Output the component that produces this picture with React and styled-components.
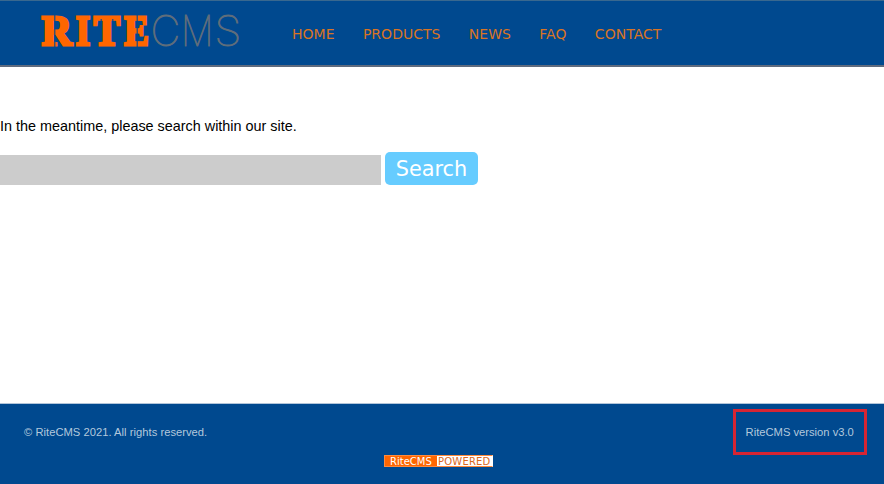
import React from "react";
import styled, { createGlobalStyle } from "styled-components";

const GlobalStyle = createGlobalStyle`
  * { box-sizing: border-box; }
  body { margin: 0; background: #fff; overflow: hidden; }
`;
const Page = styled.div`
  display: flex;
  flex-direction: column;
  height: 484px;
  font-family: "Liberation Sans", Arial, sans-serif;
`;
const Header = styled.header`
  display: flex;
  align-items: flex-start;
  height: 67px;
  background: #00498f;
  border-top: 1px solid #39688f;
  border-bottom: 2px solid #5f6b7e;
`;
const Logo = styled.svg`
  display: block;
  width: 228px;
  height: 64px;
  margin-left: 28px;
  flex: none;
`;
const Nav = styled.nav`
  display: flex;
  gap: 28.35px;
  margin: 24px 0 0 36px;
`;
const NavLink = styled.a`
  font: 14px/18px "DejaVu Sans", sans-serif;
  letter-spacing: 0.02px;
  color: #d97424;
`;
const Main = styled.main`
  flex: 1;
  padding-top: 50px;
`;
const Message = styled.p`
  margin: 0;
  font-size: 14.4px;
  line-height: 18px;
  color: #000;
`;
const SearchForm = styled.form`
  display: flex;
  align-items: flex-end;
  gap: 4px;
  margin-top: 17px;
`;
const SearchInput = styled.input`
  width: 381px;
  height: 30px;
  border: 0;
  border-radius: 0;
  background: #ccc;
  outline: none;
`;
const SearchButton = styled.button`
  width: 93px;
  height: 33px;
  padding: 1px 0 0;
  border: 0;
  border-radius: 5px;
  background: #66ccff;
  color: #fff;
  font: 20.8px/32px "DejaVu Sans", sans-serif;
`;
const Footer = styled.footer`
  height: 81px;
  border-top: 1px solid #b2c5da;
  background: #00498f;
  color: #b3c8dc;
  font-size: 11.2px;
`;
const FooterRow = styled.div`
  display: flex;
  justify-content: space-between;
  padding: 5px 17px 0 24px;
`;
const Copyright = styled.span`
  padding-top: 17px;
  line-height: 13px;
  letter-spacing: 0.025px;
`;
const Version = styled.span`
  width: 134px;
  height: 46px;
  border: 3px solid #d62534;
  padding: 14px 0 0 9.6px;
  line-height: 13px;
`;
const Badge = styled.div`
  display: flex;
  width: 109px;
  height: 12px;
  margin-left: 384px;
  border: 1px solid #ff8a3c;
  border-right-color: #fff;
  font: 10px/11px "DejaVu Sans", sans-serif;
`;
const BadgeName = styled.span`
  width: 52px;
  padding-left: 5px;
  background: #ff6600;
  color: #fff;
`;
const BadgeStatus = styled.span`
  flex: 1;
  padding-left: 1px;
  background: #fff;
  color: #d9681e;
  letter-spacing: 0.2px;
`;

const heavyLetters = [
  { char: "R", x: 41.8, width: 30.2 },
  { char: "I", x: 75.8, width: 14.4 },
  { char: "T", x: 93.8, width: 26.2 },
  { char: "E", x: 124.2, width: 24.6 },
];
const thinLetters = [
  { char: "C", x: 150.6, width: 29.8 },
  { char: "M", x: 180.9, width: 32.4 },
  { char: "S", x: 214.2, width: 27.2 },
];

function RiteLogo() {
  return (
    <Logo viewBox="28 1 228 64" role="img" aria-label="RiteCMS">
      <g fontFamily="Liberation Serif" fontWeight="700" fontSize="42" fill="#ff6600" stroke="#ff6600" strokeWidth="2.8">
        {heavyLetters.map((l) => (
          <text key={l.char} x={l.x} y="45.1" textLength={l.width} lengthAdjust="spacingAndGlyphs">{l.char}</text>
        ))}
      </g>
      <path d="M54.8 15V47M101.2 19V28M112.8 19V28M137.2 15V47" stroke="#00498f" strokeWidth="1.1" />
      <g fontFamily="Inter" fontWeight="100" fontSize="42" fill="#5f6d7b" stroke="#5f6d7b" strokeWidth="0.9">
        {thinLetters.map((l) => (
          <text key={l.char} x={l.x} y="46.4" textLength={l.width} lengthAdjust="spacingAndGlyphs">{l.char}</text>
        ))}
      </g>
    </Logo>
  );
}

export default function App() {
  return (
    <Page>
      <GlobalStyle />
      <Header>
        <RiteLogo />
        <Nav>
          {["HOME", "PRODUCTS", "NEWS", "FAQ", "CONTACT"].map((t) => (
            <NavLink key={t}>{t}</NavLink>
          ))}
        </Nav>
      </Header>
      <Main>
        <Message>In the meantime, please search within our site.</Message>
        <SearchForm>
          <SearchInput aria-label="Search" />
          <SearchButton type="button">Search</SearchButton>
        </SearchForm>
      </Main>
      <Footer>
        <FooterRow>
          <Copyright>© RiteCMS 2021. All rights reserved.</Copyright>
          <Version>RiteCMS version v3.0</Version>
        </FooterRow>
        <Badge>
          <BadgeName>RiteCMS</BadgeName>
          <BadgeStatus>POWERED</BadgeStatus>
        </Badge>
      </Footer>
    </Page>
  );
}
